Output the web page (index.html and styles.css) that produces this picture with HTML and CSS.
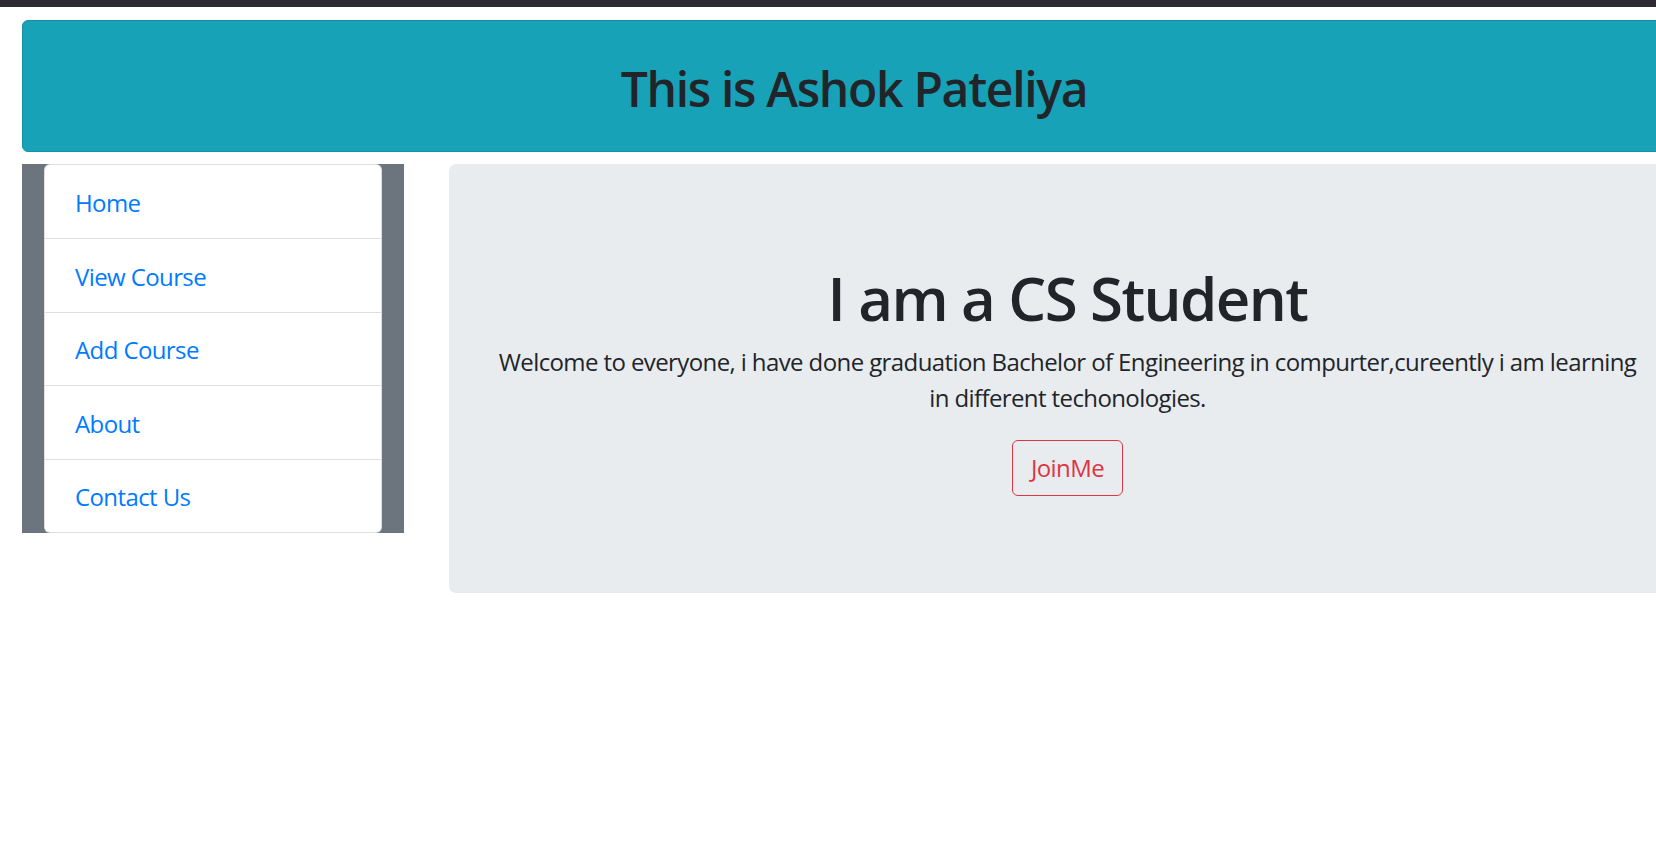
FILE: index.html
```html
<!DOCTYPE html>
<html lang="en">
<head>
<meta charset="utf-8">
<title>Ashok Pateliya</title>
<link rel="stylesheet" href="styles.css">
</head>
<body>
<div class="topbar"></div>
<div class="container">
  <header class="banner">
    <h2 class="banner-title">This is Ashok Pateliya</h2>
  </header>
  <div class="row">
    <aside class="sidebar">
      <nav class="list-group">
        <a class="list-item" href="#">Home</a>
        <a class="list-item" href="#">View Course</a>
        <a class="list-item" href="#">Add Course</a>
        <a class="list-item" href="#">About</a>
        <a class="list-item" href="#">Contact Us</a>
      </nav>
    </aside>
    <main class="jumbotron">
      <h1 class="jumbo-title">I am a CS Student</h1>
      <p class="jumbo-text">Welcome to everyone, i have done graduation Bachelor of Engineering in compurter,cureently i am learning in different techonologies.</p>
      <button class="btn-outline-danger" type="button">JoinMe</button>
    </main>
  </div>
</div>
</body>
</html>
```
FILE: styles.css
```css
html, body {
  margin: 0;
  padding: 0;
  overflow: hidden;
  background: #ffffff;
}

body {
  font-family: "Open Sans", "Noto Sans", sans-serif;
  font-size: 24px;
  line-height: 36px;
  color: #212529;
}

.topbar {
  height: 7px;
  background: #2f2a31;
}

.container {
  width: 1664px;
  padding: 13px 22px 0 22px;
}

.banner {
  box-sizing: border-box;
  height: 132px;
  background: #17a2b8;
  border: 1px solid #1592a6;
  border-radius: 6px;
  display: flex;
  align-items: center;
  justify-content: center;
}

.banner-title {
  margin: 0;
  padding-top: 6px;
  font-size: 48px;
  line-height: 57.6px;
  font-weight: 600;
  letter-spacing: -1.3px;
  color: #212529;
}

.row {
  display: grid;
  grid-template-columns: 382px 1fr;
  column-gap: 45px;
  margin-top: 12px;
  align-items: start;
}

.sidebar {
  background: #6c757d;
  padding: 0 22px;
}

.list-group {
  display: flex;
  flex-direction: column;
  background: #ffffff;
  border: 1px solid rgba(0, 0, 0, 0.125);
  border-radius: 6px;
  overflow: hidden;
}

.list-item {
  display: block;
  padding: 19.5px 30px 17px 30px;
  color: #007bff;
  text-decoration: none;
  letter-spacing: -0.6px;
  border-top: 1px solid rgba(0, 0, 0, 0.125);
  height: 36px;
  line-height: 36px;
}

.list-item:first-child {
  border-top: 0;
  padding-top: 20px;
}

.jumbotron {
  background: #e9ecef;
  border-radius: 7px;
  padding: 96px 48px 97px 48px;
  text-align: center;
}

.jumbo-title {
  margin: 0 0 10px 0;
  padding-top: 2px;
  font-size: 60px;
  line-height: 72px;
  font-weight: 600;
  letter-spacing: -1.6px;
}

.jumbo-text {
  margin: 0 0 24px 0;
  letter-spacing: -0.6px;
}

.btn-outline-danger {
  font-family: inherit;
  font-size: 24px;
  line-height: 36px;
  letter-spacing: -0.6px;
  color: #dc3545;
  background: transparent;
  border: 1.5px solid #dc3545;
  border-radius: 6px;
  padding: 9px 18px;
  cursor: pointer;
}
```
